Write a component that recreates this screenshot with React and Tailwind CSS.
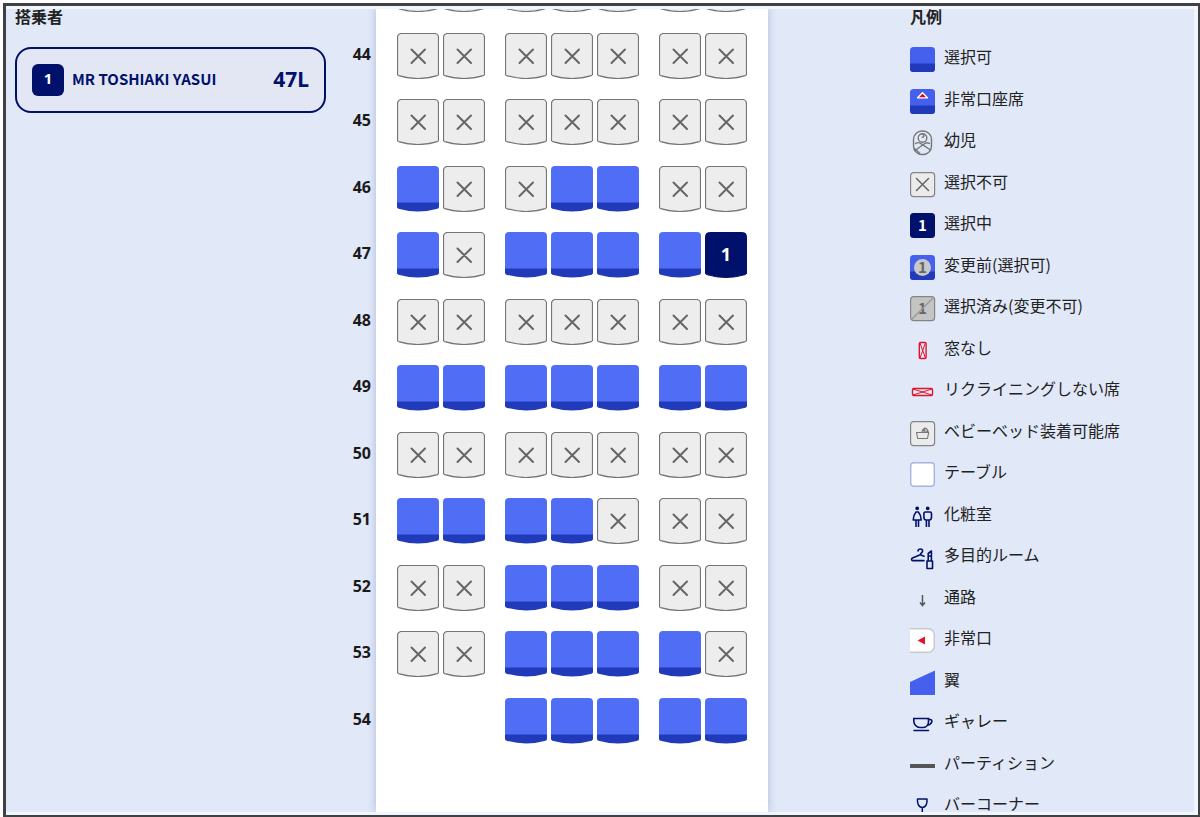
import { useState } from "react"

const FONT = "font-['Noto_Sans','Noto_Sans_CJK_JP',sans-serif]"
const FONT_JP = "font-['Noto_Sans_CJK_JP','Noto_Sans',sans-serif]"

// o = available, x = not available, . = no seat, space = aisle
const ROWS = [
    { row: 43, seats: "xx xxx xx", hideLabel: true },
    { row: 44, seats: "xx xxx xx" },
    { row: 45, seats: "xx xxx xx" },
    { row: 46, seats: "ox xoo xx" },
    { row: 47, seats: "ox ooo oo" },
    { row: 48, seats: "xx xxx xx" },
    { row: 49, seats: "oo ooo oo" },
    { row: 50, seats: "xx xxx xx" },
    { row: 51, seats: "oo oox xx" },
    { row: 52, seats: "xx ooo xx" },
    { row: 53, seats: "xx ooo ox" },
    { row: 54, seats: ".. ooo oo" },
]

const LETTERS = ["AC", "EFG", "KL"]

const SEAT_PATH = "M4.5 .5h33a4 4 0 0 1 4 4v36.500q0 1.200-1.200 1.600q-19.300 5.800-38.600 0q-1.200-.4-1.200-1.600v-36.500a4 4 0 0 1 4-4z"

const SeatShape = ({ status }) => {
    if (status === "selected") {
        return (
            <svg viewBox="0 0 42 46" className="absolute inset-0 w-full h-full">
                <path d={SEAT_PATH} fill="#00116b" stroke="#00116b" />
            </svg>
        )
    }
    if (status === "open") {
        return (
            <svg viewBox="0 0 42 46" className="absolute inset-0 w-full h-full">
                <path d="M4 0h34a4 4 0 0 1 4 4v33h-42v-33a4 4 0 0 1 4-4z" fill="#506ef5" />
                <path d="M0 36.500h42v4.500q0 1.200-1.500 1.700q-19.500 5.600-39 0q-1.500-.5-1.500-1.700z" fill="#203ab9" />
            </svg>
        )
    }
    return (
        <svg viewBox="0 0 42 46" className="absolute inset-0 w-full h-full">
            <path d={SEAT_PATH} fill="#ededed" stroke="#757575" strokeWidth="1.2" />
            <path d="M14.500 16.500l13.500 13.500M28 16.500l-13.500 13.500" stroke="#666" strokeWidth="2" strokeLinecap="round" />
        </svg>
    )
}

const Seat = ({ id, type, selected, onSelect }) => {
    if (type === ".") return <span className="w-[42px] h-[46px]" />
    const status = type === "x" ? "closed" : selected ? "selected" : "open"
    return (
        <button
            type="button"
            aria-label={id}
            aria-pressed={selected}
            disabled={type === "x"}
            onClick={() => onSelect(id)}
            className="relative w-[42px] h-[46px] cursor-pointer disabled:cursor-default"
        >
            <SeatShape status={status} />
            {selected && <span className="relative block pb-0.5 text-lg leading-6 font-bold text-white">1</span>}
        </button>
    )
}

const Icon = ({ children }) => (
    <svg viewBox="0 0 26 26" className="w-[26px] h-[26px] shrink-0" fill="none" aria-hidden="true">
        {children}
    </svg>
)

const BlueBox = () => (
    <>
        <rect width="25" height="25" rx="3.500" fill="#4460ec" />
        <path d="M0 16.500h25v5a3.500 3.500 0 0 1-3.500 3.500h-18a3.500 3.500 0 0 1-3.500-3.500z" fill="#203ab9" />
    </>
)

const GreyBox = ({ fill = "#ebebeb" }) => (
    <rect x=".6" y=".6" width="24" height="24" rx="3" fill={fill} stroke="#858585" strokeWidth="1.2" />
)

const Digit = ({ fill }) => (
    <text x="12.500" y="18" textAnchor="middle" fontSize="15" fontWeight="700" fill={fill}>1</text>
)

const LEGEND = [
    { label: "選択可", icon: <BlueBox /> },
    {
        label: "非常口座席",
        icon: (
            <>
                <BlueBox />
                <path d="M12.500 3.800l5 5h-10z" fill="#e60012" stroke="#fff" strokeWidth="1.300" strokeLinejoin="round" />
            </>
        ),
    },
    {
        label: "幼児",
        icon: (
            <g stroke="#777" strokeWidth="1.400" strokeLinecap="round">
                <rect x="3.500" y="1" width="18" height="23.500" rx="8.500" />
                <circle cx="12.500" cy="8" r="4.300" />
                <path d="M12.500 4c2 .8 1.800 3.200-.2 3.200M5.500 13.500c2-1.500 3.800-1 5.500.2l9.500 6.300M19.500 13.500c-2-1.500-3.500-.8-5 .3l-9.500 6.700M4.500 18.500l5 4.500" />
            </g>
        ),
    },
    {
        label: "選択不可",
        icon: (
            <>
                <GreyBox />
                <path d="M6.500 6.500l12 12M18.500 6.500l-12 12" stroke="#666" strokeWidth="1.500" strokeLinecap="round" />
            </>
        ),
    },
    {
        label: "選択中",
        icon: (
            <>
                <rect width="25" height="25" rx="3.500" fill="#00116b" />
                <Digit fill="#fff" />
            </>
        ),
    },
    {
        label: "変更前(選択可)",
        icon: (
            <>
                <BlueBox />
                <circle cx="12.500" cy="12.500" r="8.500" fill="#c8c8c8" />
                <Digit fill="#666" />
            </>
        ),
    },
    {
        label: "選択済み(変更不可)",
        icon: (
            <>
                <GreyBox fill="#c4c4c4" />
                <Digit fill="#666" />
                <path d="M1.500 23.500l22-22" stroke="#999" strokeWidth="1.200" />
            </>
        ),
    },
    {
        label: "窓なし",
        icon: (
            <g stroke="#e0142d" strokeWidth="1.400">
                <rect x="9.300" y="4.500" width="6.800" height="16" rx="1.200" />
                <path d="M10 5l5.400 15M15.400 5l-5.400 15" strokeWidth="1" />
            </g>
        ),
    },
    {
        label: "リクライニングしない席",
        icon: (
            <g stroke="#e0142d" strokeWidth="1.400">
                <rect x="2.500" y="9.500" width="20" height="7" rx="1.200" />
                <path d="M3 10l19 6M22 10l-19 6" strokeWidth="1" />
            </g>
        ),
    },
    {
        label: "ベビーベッド装着可能席",
        icon: (
            <>
                <GreyBox />
                <g stroke="#777" strokeWidth="1.100" strokeLinejoin="round">
                    <path d="M6.500 11.500h12.200l-1.200 6h-9.800z" />
                    <path d="M12 11.500c0-2 1-3.500 3-4.500 2 .8 3.200 2.300 3.200 4.500M15 7l-1 4.500M12.500 9.500l5 1" />
                </g>
            </>
        ),
    },
    {
        label: "テーブル",
        icon: <rect x=".7" y=".7" width="23.600" height="23.600" rx="3" fill="#fff" stroke="#aab2de" strokeWidth="1.400" />,
    },
    {
        label: "化粧室",
        icon: (
            <g stroke="#00116b" strokeWidth="1.600" strokeLinejoin="round">
                <circle cx="7.200" cy="4.300" r="1.100" fill="#00116b" />
                <circle cx="17.700" cy="4.300" r="1.100" fill="#00116b" />
                <path d="M6 8h2.400q2.600 3 2.800 8h-8q.2-5 2.800-8z M6 16v7M8.500 16v7" />
                <path d="M15.500 8h4.400q1.600 0 1.600 1.600v3.400q0 3-2.200 3h-3.200q-2.200 0-2.200-3v-3.400q0-1.600 1.600-1.600z M16.400 16v7M19 16v7" />
            </g>
        ),
    },
    {
        label: "多目的ルーム",
        icon: (
            <g stroke="#00116b" strokeWidth="1.600" strokeLinecap="round" strokeLinejoin="round">
                <path d="M8 6c.3-2.600 4.600-2.600 4.600 0 0 1.800-2.300 1.800-2.300 3.800l-7.800 3.200c-1.500.8-1.200 2.600.5 2.600h11M10.300 9.800l3.700 1.400" />
                <path d="M17 16h5.500v7.500h-5.500zM18.200 15.500v-7l3.200-2.500v9.500M18.200 11h3.200" />
            </g>
        ),
    },
    {
        label: "通路",
        icon: <path d="M12.500 8v10M10 15.500l2.500 3 2.500-3" stroke="#555" strokeWidth="1.500" />,
    },
    {
        label: "非常口",
        icon: (
            <>
                <path d="M0 .7h18.300a6 6 0 0 1 6 6v11.600a6 6 0 0 1-6 6h-18.300z" fill="#fff" />
                <path d="M0 .7h18.300a6 6 0 0 1 6 6v11.600a6 6 0 0 1-6 6h-18.300" stroke="#c9c9cd" strokeWidth="1.500" />
                <path d="M7.500 12.500l7.500-4v8z" fill="#e0142d" />
            </>
        ),
    },
    { label: "翼", icon: <path d="M0 12l25-11.500v24.500h-25z" fill="#4460ec" /> },
    {
        label: "ギャレー",
        icon: (
            <g stroke="#00116b" strokeWidth="1.600" strokeLinecap="round">
                <path d="M3.800 7.500h14.700v3c0 3.500-2.200 6-5.200 6h-3.300c-3.500 0-6.200-3-6.200-6.500z" />
                <path d="M18.500 8.500h1.800c2.600 0 2.300 4.800-3 5.700M4 19.500h14.500" />
            </g>
        ),
    },
    { label: "パーティション", icon: <rect y="11" width="25" height="4" rx=".5" fill="#555" /> },
    {
        label: "バーコーナー",
        icon: (
            <g stroke="#00116b" strokeWidth="1.500" strokeLinecap="round" strokeLinejoin="round">
                <path d="M7.500 5h9.500c.3 4.500-1 8.500-4.700 8.500s-5.100-4-4.800-8.500zM12.300 13.500v7M8.500 20.500h7.500" />
            </g>
        ),
    },
]

const Passenger = ({ seat }) => (
    <div className="mt-[19px] flex items-center rounded-2xl border-2 border-[#00116b] bg-[#e3e7f3] h-[66px] px-[15px] text-[#00116b]">
        <span className="flex h-8 w-8 items-center justify-center rounded-md bg-[#00116b] pb-1 text-[15px] font-bold text-white">1</span>
        <span className={`flex-1 pl-2 pb-0.5 text-[15px] font-bold leading-5 whitespace-nowrap ${FONT_JP}`}>MR TOSHIAKI YASUI</span>
        <span className="pb-0.5 text-[21px] leading-6 font-bold">{seat}</span>
    </div>
)

const SeatRow = ({ row, seats, hideLabel, selectedSeat, onSelect }) => (
    <li className="flex items-center h-[66px] even:h-[67px]">
        <span className="w-[45px] pb-1 text-right font-bold leading-5 text-[#1a1a1a]">{!hideLabel && row}</span>
        <div className="ml-[26px] flex gap-5">
            {seats.split(" ").map((group, g) => (
                <div key={g} className="flex gap-1">
                    {group.split("").map((type, i) => {
                        const id = `${row}${LETTERS[g][i]}`
                        return <Seat key={id} id={id} type={type} selected={selectedSeat === id} onSelect={onSelect} />
                    })}
                </div>
            ))}
        </div>
    </li>
)

function App() {
    const [selectedSeat, setSelectedSeat] = useState("47L")

    return (
        <div className={`h-screen bg-white pt-[3px] pl-[3px] text-base text-[#222] ${FONT}`}>
            <div className="h-full border-t-[3px] border-l-[3px] border-r-2 border-b-2 border-[#404145] bg-[#f1f5fc] pt-[3px] pb-[3px] pr-1">
                <div className="flex h-full bg-[#e1e8f8]">
                    <aside className="w-80 shrink-0 pl-[9px]">
                        <h2 className={`h-[19px] font-bold leading-[14px] ${FONT_JP}`}>搭乗者</h2>
                        <Passenger seat={selectedSeat} />
                    </aside>

                    <main className="flex flex-1 overflow-hidden">
                        <div className="relative w-[442px] shrink-0">
                            <div className="absolute inset-y-0 right-0 w-[392px] bg-white shadow-[0_0_8px_rgba(60,80,140,0.3)]" />
                            <ul className="relative -mt-[53px]">
                                {ROWS.map((r) => (
                                    <SeatRow key={r.row} {...r} selectedSeat={selectedSeat} onSelect={setSelectedSeat} />
                                ))}
                            </ul>
                        </div>
                    </main>

                    <aside className="flex w-[284px] shrink-0 flex-col">
                        <h2 className={`h-[30px] shrink-0 font-bold leading-[14px] ${FONT_JP}`}>凡例</h2>
                        <ul className={`min-h-0 flex-1 overflow-hidden ${FONT_JP}`}>
                            {LEGEND.map((item) => (
                                <li key={item.label} className="flex items-center gap-2 h-[42px] even:h-[41px]">
                                    <Icon>{item.icon}</Icon>
                                    <span className="pb-2 leading-5 whitespace-nowrap">{item.label}</span>
                                </li>
                            ))}
                        </ul>
                    </aside>
                </div>
            </div>
        </div>
    )
}

export default App
